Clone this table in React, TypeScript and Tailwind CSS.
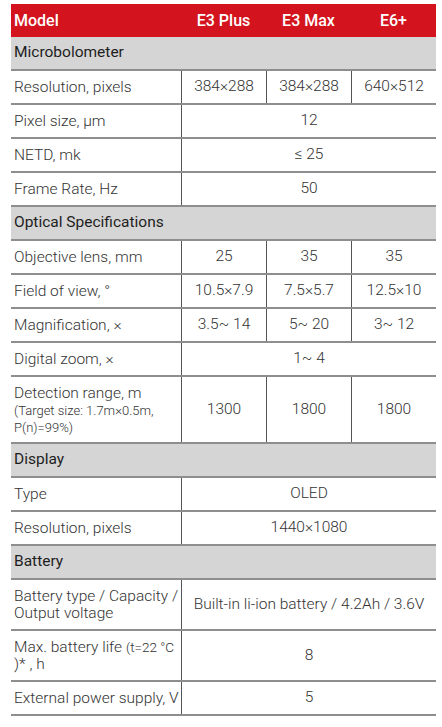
import React from "react"

type Cell = { text: React.ReactNode; span?: number }

const font = { fontFamily: "Roboto, 'Liberation Sans', Arial, sans-serif" }

function Section({ title }: { title: string }) {
  return (
    <div className="flex h-[34px] items-center border-b-2 border-[#8e8e8e] bg-[#d5d5d5] pl-[3px] text-[15.5px] font-normal text-[#1e1e1e]">
      {title}
    </div>
  )
}

function Row({ label, cells, h = "h-[34px]" }: { label: React.ReactNode; cells: Cell[]; h?: string }) {
  return (
    <div className={`grid grid-cols-[170px_85px_85px_85px] border-b-2 border-[#8e8e8e] ${h}`}>
      <div className="flex items-center whitespace-nowrap pl-[3px] text-[15.5px] leading-[17px] text-[#333]">{label}</div>
      {cells.map((c, i) => (
        <div
          key={i}
          className={`flex items-center justify-center border-l-[1.5px] border-[#555] text-[15.5px] text-[#333] ${
            c.span === 3 ? "col-span-3" : ""
          }`}
        >
          {c.text}
        </div>
      ))}
    </div>
  )
}

export default function App() {
  return (
    <div className="min-h-screen bg-white px-[11px] pt-[4px] font-light" style={font}>
      <div className="w-[425px]">
        <div className="grid h-[33px] grid-cols-[170px_85px_85px_85px] items-center bg-[#d3141e] text-[16px] font-medium text-white">
          <div className="pl-[3px]">Model</div>
          <div className="text-center">E3 Plus</div>
          <div className="text-center">E3 Max</div>
          <div className="text-center">E6+</div>
        </div>

        <Section title="Microbolometer" />
        <Row label="Resolution, pixels" cells={[{ text: "384×288" }, { text: "384×288" }, { text: "640×512" }]} />
        <Row label="Pixel size, μm" cells={[{ text: "12", span: 3 }]} />
        <Row label="NETD, mk" cells={[{ text: "≤ 25", span: 3 }]} />
        <Row label="Frame Rate, Hz" cells={[{ text: "50", span: 3 }]} />

        <Section title="Optical Specifications" />
        <Row label="Objective lens, mm" cells={[{ text: "25" }, { text: "35" }, { text: "35" }]} />
        <Row label="Field of view, °" cells={[{ text: "10.5×7.9" }, { text: "7.5×5.7" }, { text: "12.5×10" }]} />
        <Row label="Magnification, ×" cells={[{ text: "3.5~ 14" }, { text: "5~ 20" }, { text: "3~ 12" }]} />
        <Row label="Digital zoom, ×" cells={[{ text: "1~ 4", span: 3 }]} />
        <Row
          h="h-[67px]"
          label={
            <div>
              <div className="leading-[18px]">Detection range, m</div>
              <div className="text-[13px] leading-[17px]">
                (Target size: 1.7m×0.5m,
                <br />
                P(n)=99%)
              </div>
            </div>
          }
          cells={[{ text: "1300" }, { text: "1800" }, { text: "1800" }]}
        />

        <Section title="Display" />
        <Row label="Type" cells={[{ text: "OLED", span: 3 }]} />
        <Row label="Resolution, pixels" cells={[{ text: "1440×1080", span: 3 }]} />

        <Section title="Battery" />
        <Row
          h="h-[51px]"
          label={
            <div>
              Battery type / Capacity /
              <br />
              Output voltage
            </div>
          }
          cells={[{ text: "Built-in li-ion battery / 4.2Ah / 3.6V", span: 3 }]}
        />
        <Row
          h="h-[51px]"
          label={
            <div>
              Max. battery life <span className="text-[13.5px]">(t=22 °C</span>
              <br />
              )* , h
            </div>
          }
          cells={[{ text: "8", span: 3 }]}
        />
        <Row label="External power supply, V" cells={[{ text: "5", span: 3 }]} />
      </div>
    </div>
  )
}
